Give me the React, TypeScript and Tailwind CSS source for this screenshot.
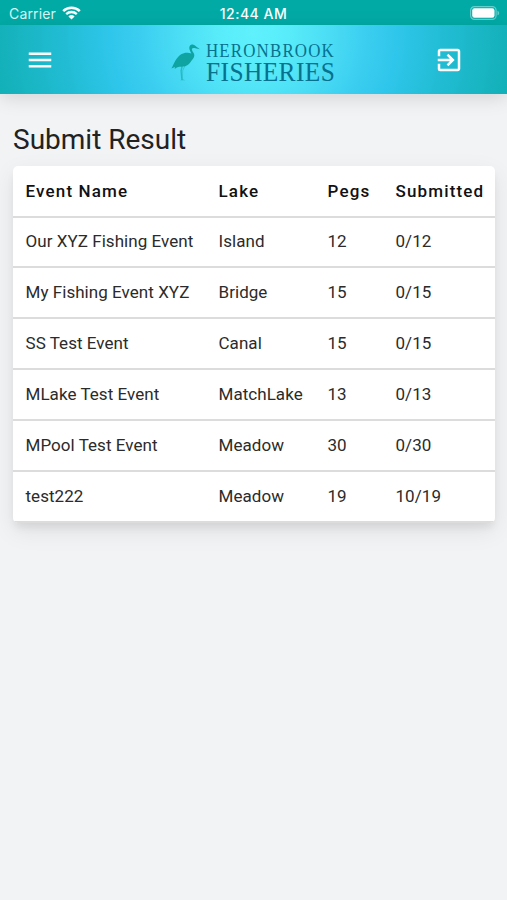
type EventRow = {
  name: string;
  lake: string;
  pegs: number;
  submitted: string;
};

const events: EventRow[] = [
  { name: "Our XYZ Fishing Event", lake: "Island", pegs: 12, submitted: "0/12" },
  { name: "My Fishing Event XYZ", lake: "Bridge", pegs: 15, submitted: "0/15" },
  { name: "SS Test Event", lake: "Canal", pegs: 15, submitted: "0/15" },
  { name: "MLake Test Event", lake: "MatchLake", pegs: 13, submitted: "0/13" },
  { name: "MPool Test Event", lake: "Meadow", pegs: 30, submitted: "0/30" },
  { name: "test222", lake: "Meadow", pegs: 19, submitted: "10/19" },
];

function StatusBar() {
  return (
    <div className="grid h-[25px] grid-cols-3 items-center bg-[#02aaa6] pt-[3px] pr-[7px] pl-[9px] font-['Inter',sans-serif] text-[14px] leading-none text-[#d5f7f5]">
      <div className="flex items-center gap-[6px]">
        <span className="tracking-[0.15px]">Carrier</span>
        <svg width="19" height="14" viewBox="0 0 19 14" fill="none" className="-mt-[2px]">
          <path d="M1.2 5.1a12 12 0 0 1 16.6 0" stroke="white" strokeWidth="2.5" />
          <path d="M4.2 8.1a7.8 7.8 0 0 1 10.6 0" stroke="white" strokeWidth="2.3" />
          <path d="M6.4 10.4a4.6 4.6 0 0 1 6.2 0L9.5 13.6Z" fill="white" />
        </svg>
      </div>
      <span className="-ml-[2px] text-center font-medium tracking-[0.5px] text-white">12:44 AM</span>
      <svg width="30" height="14" viewBox="0 0 30 14" className="-mt-[2px] justify-self-end">
        <rect x="0.6" y="0.6" width="25.5" height="12.8" rx="3.8" fill="none" stroke="#64cfcb" strokeWidth="1.2" />
        <rect x="2.2" y="2.2" width="22.3" height="9.6" rx="2.2" fill="white" />
        <path d="M27.5 4.7c2.2.8 2.2 3.8 0 4.6Z" fill="#64cfcb" />
      </svg>
    </div>
  );
}

function Logo() {
  return (
    <svg width="166" height="56" viewBox="0 -4 166 56" className="ml-[18px]" aria-label="Heronbrook Fisheries">
      <g fill="#0fa3a2" transform="translate(0 2.6)">
        <path d="M18.6 11.2C17.6 8 19.2 5.8 21.8 6 23.4 6.2 24.6 7.6 28.8 10.6L23.4 9.4C21.6 9 20.6 9.8 21 11.4 21.5 13.4 23.6 14.6 23.3 17.2 23 19.6 21 21.4 19.4 23.6 17.6 26.2 15.2 27.6 12 28 9.6 28.3 7.6 27.5 5.8 29L3.7 30.4 4 28.4.4 29.8C2.3 26.8 2.9 24.4 4.3 22.1 6.4 18.6 9.6 15.2 13.6 14.4 16.3 13.9 19.2 15 20.4 15 19.8 13.8 19.1 12.8 18.6 11.2Z" />
        <path d="M10.5 27.2h1.4l-1.1 5.1.6 8.3 2.8 1H9.4l.8-.8-.8-8.7Z" opacity=".6" />
        <path d="M13.6 26.6h1.1l-2.5 5.4-.4 8.8h-.7l.2-8.8Z" opacity=".4" />
      </g>
      <g fill="#08718e" fontFamily="'Liberation Serif', serif">
        <g transform="translate(35 20.6) scale(.9 1)">
          <text fontSize="18.8" textLength="142" lengthAdjust="spacing">HERONBROOK</text>
        </g>
        <g transform="translate(35 44.5) scale(.94 1)">
          <text fontSize="27" textLength="137" lengthAdjust="spacing">FISHERIES</text>
        </g>
      </g>
    </svg>
  );
}

function AppBar() {
  return (
    <header className="relative flex h-[69px] items-center justify-between bg-[radial-gradient(circle_at_50%_12%,#5ff2fd_0%,#57eaf9_15%,#4adcf4_30%,#3acdf0_44%,#2fc6eb_55%,#22bdd5_72%,#12b0b7_100%)] pr-[43px] pl-[25px] text-white shadow-[0_4px_18px_rgba(0,0,0,0.13)]">
      <button aria-label="Menu">
        <svg width="30" height="30" viewBox="0 0 24 24" fill="currentColor">
          <path d="M3 18h18v-2H3v2zm0-5h18v-2H3v2zm0-7v2h18V6H3z" />
        </svg>
      </button>
      <Logo />
      <button aria-label="Sign out">
        <svg width="30" height="30" viewBox="0 0 24 24" fill="currentColor">
          <path d="M10.09 15.59 11.5 17l5-5-5-5-1.41 1.41L12.67 11H3v2h9.67l-2.58 2.59zM19 3H5a2 2 0 0 0-2 2v4h2V5h14v14H5v-4H3v4a2 2 0 0 0 2 2h14c1.1 0 2-.9 2-2V5c0-1.1-.9-2-2-2z" />
        </svg>
      </button>
    </header>
  );
}

const headCell = "h-[52px] border-b-2 border-[#dcdcdc] p-0 pt-px pl-[12.5px] font-medium";
const bodyCell = "border-b-2 border-[#dcdcdc] p-0 pl-[12.5px]";

function ResultsTable() {
  return (
    <div className="overflow-hidden rounded-[5px] bg-white shadow-[0_6px_8px_-2px_rgba(0,0,0,0.08),0_8px_24px_rgba(0,0,0,0.08)]">
      <table className="w-full table-fixed border-separate border-spacing-0 text-left text-[17px] text-[#2b2b2b]">
        <colgroup>
          <col className="w-[193px]" />
          <col className="w-[109px]" />
          <col className="w-[68px]" />
          <col />
        </colgroup>
        <thead>
          <tr className="tracking-[1.15px] text-[#111]">
            <th className={headCell}>Event Name</th>
            <th className={headCell}>Lake</th>
            <th className={headCell}>Pegs</th>
            <th className={headCell}>Submitted</th>
          </tr>
        </thead>
        <tbody>
          {events.map((event) => (
            <tr key={event.name} className="h-[51px] tracking-[0.05px] whitespace-nowrap first:h-[50px]">
              <td className={bodyCell}>{event.name}</td>
              <td className={bodyCell}>{event.lake}</td>
              <td className={bodyCell}>{event.pegs}</td>
              <td className={bodyCell}>{event.submitted}</td>
            </tr>
          ))}
        </tbody>
      </table>
    </div>
  );
}

export default function App() {
  return (
    <div className="h-[900px] w-[507px] overflow-hidden bg-[#f2f3f5] font-['Roboto',sans-serif]">
      <StatusBar />
      <AppBar />
      <main className="pt-[26px] pr-3 pl-[13px]">
        <h1 className="mb-[6px] text-[28px] leading-[40px] text-[#222]">Submit Result</h1>
        <ResultsTable />
      </main>
    </div>
  );
}
